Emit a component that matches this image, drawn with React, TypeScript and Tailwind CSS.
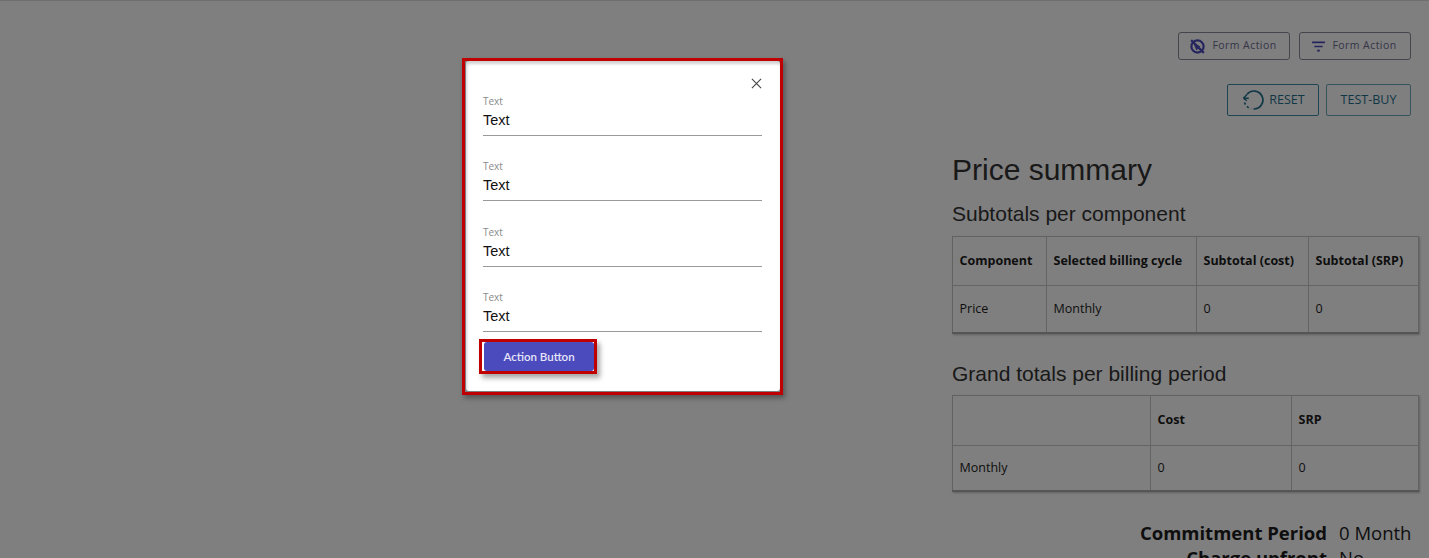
import React from 'react';

const sans = "font-['Open_Sans',sans-serif]";
const arial = "font-['Liberation_Sans',Arial,sans-serif]";

function NoVisibilityIcon() {
  return (
    <svg viewBox="0 0 20 20" className="w-[17px] h-[17px]" fill="none" stroke="#4b4bbd">
      <circle cx="10" cy="10" r="7.2" strokeWidth="2.6" />
      <path d="M6 6.5 L12.5 10 L9 14 Z" fill="#4b4bbd" strokeWidth="1" />
      <path d="M2.5 2.5 L17.5 17.5" strokeWidth="2.6" />
    </svg>
  );
}

function FilterIcon() {
  return (
    <svg viewBox="0 0 16 12" className="w-[15px] h-[11px]" fill="none" stroke="#4b4bbd" strokeWidth="1.9">
      <path d="M1 1.5h14M3.5 6h9M6.5 10.5h3" />
    </svg>
  );
}

function ResetIcon() {
  return (
    <svg viewBox="0 0 24 24" className="w-[24px] h-[24px]" fill="none" stroke="#1f6f8b" strokeWidth="1.7">
      <path d="M6 6.2A9 9 0 1 1 12.5 21" />
      <path d="M2.4 10.2h5.4M2.4 10.2l3.6-3.8M2.4 10.2l3.4 2.6" strokeWidth="1.4" />
      <path d="M3.6 14.5a9 9 0 0 0 6.6 6.3" strokeDasharray="2.2 2.4" />
    </svg>
  );
}

function FormActionButton({ icon }: { icon: React.ReactNode }) {
  return (
    <button className={`h-[28px] w-[112px] pr-[2px] flex items-center justify-center gap-[6px] rounded-[3px] border border-[#8a8a9a] text-[10.5px] tracking-[0.45px] text-[#6a6a90] ${sans}`}>
      {icon}
      Form Action
    </button>
  );
}

function Field() {
  return (
    <div className="border-b border-[#999999] h-[42px]">
      <div className={`text-[10px] leading-[14px] text-[#8a8a8a] ${sans}`}>Text</div>
      <div className={`text-[14.5px] leading-[20px] mt-[2px] text-[#111] ${arial}`}>Text</div>
    </div>
  );
}

const th = 'border-r border-[#c9c9c9] last:border-r-0 px-[6.5px] text-left font-bold';
const td = 'border-r border-[#c9c9c9] last:border-r-0 px-[6.5px] pt-[2px] text-left font-normal';

function SummaryTable({ widths, head, row, headH, rowH }: {
  widths: number[];
  head: string[];
  row: string[];
  headH: string;
  rowH: string;
}) {
  return (
    <table className={`w-full table-fixed border-collapse text-[12.5px] text-[#1c1c1c] border border-[#c4c4c4] border-b-2 border-b-[#aaaaaa] shadow-[1px_1px_2px_rgba(0,0,0,0.25)] ${sans}`}>
      <colgroup>
        {widths.map((w, i) => (
          <col key={i} style={{ width: w }} />
        ))}
      </colgroup>
      <thead>
        <tr className={`${headH} border-b border-[#c9c9c9]`}>
          {head.map((h, i) => (
            <th key={i} className={th}>{h}</th>
          ))}
        </tr>
      </thead>
      <tbody>
        <tr className={rowH}>
          {row.map((c, i) => (
            <td key={i} className={td}>{c}</td>
          ))}
        </tr>
      </tbody>
    </table>
  );
}

export default function App() {
  return (
    <div className="relative h-[558px] overflow-hidden bg-white">
      {/* Page behind the dialog */}
      <div className="flex justify-end pr-[11px]">
        <div className="w-[466px]">
          <div className="mr-[7px] pt-[32px] flex justify-end gap-[9px]">
            <FormActionButton icon={<NoVisibilityIcon />} />
            <FormActionButton icon={<FilterIcon />} />
          </div>
          <div className={`mr-[7px] mt-[24px] flex justify-end gap-[7px] text-[12.5px] text-[#1f6f8b] ${sans}`}>
            <button className="h-[32px] w-[92px] flex items-center justify-center gap-[4px] rounded-[2px] border border-[#3b8aa5]">
              <ResetIcon />
              RESET
            </button>
            <button className="h-[32px] w-[85px] rounded-[2px] border border-[#6fa6ba]">TEST-BUY</button>
          </div>

          <h1 className={`mt-[35px] text-[30px] leading-[38px] text-[#333] ${arial}`}>Price summary</h1>
          <h2 className={`mt-[13px] text-[21px] leading-[24px] text-[#333] ${arial}`}>Subtotals per component</h2>
          <div className="mt-[10px]">
            <SummaryTable
              widths={[94, 150, 112, 110]}
              head={['Component', 'Selected billing cycle', 'Subtotal (cost)', 'Subtotal (SRP)']}
              row={['Price', 'Monthly', '0', '0']}
              headH="h-[49px]"
              rowH="h-[47px]"
            />
          </div>

          <h2 className={`mt-[28px] text-[21px] leading-[24px] text-[#333] ${arial}`}>Grand totals per billing period</h2>
          <div className="mt-[9px]">
            <SummaryTable
              widths={[198, 141, 127]}
              head={['', 'Cost', 'SRP']}
              row={['Monthly', '0', '0']}
              headH="h-[50px]"
              rowH="h-[46px]"
            />
          </div>

          <div className={`mr-[7px] mt-[28px] text-[18.5px] leading-[25px] text-[#1c1c1c] ${sans}`}>
            <div className="grid grid-cols-[1fr_72px] gap-x-[12px] whitespace-nowrap">
              <span className="text-right font-bold">Commitment Period</span>
              <span>0 Month</span>
              <span className="text-right font-bold">Charge upfront</span>
              <span>No</span>
            </div>
          </div>
        </div>
      </div>

      {/* Overlay */}
      <div className="absolute inset-0 bg-black/50 border-t border-[#6f6f6f]" />

      {/* Dialog, highlighted with a red frame */}
      <div className="absolute left-[462px] top-[58px] w-[321px] h-[337px] border-[3px] border-[#c00000] pl-[1px] pb-[1px] shadow-[2px_3px_5px_rgba(0,0,0,0.35)]">
        <div className="relative h-full rounded-[3px] bg-white pl-[17px] pr-[18px] pt-[33px] shadow-[inset_1px_3px_3px_rgba(0,0,0,0.18)]">
          <button className="absolute right-[16px] top-[14px] w-[16px] h-[16px] flex items-center justify-center">
            <svg viewBox="0 0 12 12" className="w-[11px] h-[11px]" fill="none" stroke="#444" strokeWidth="1.2">
              <path d="M1 1l10 10M11 1L1 11" />
            </svg>
          </button>
          <div className="flex flex-col gap-[23.3px]">
            <Field />
            <Field />
            <Field />
            <Field />
          </div>
          <div className="mt-[7px] -ml-[4px] w-[118px] h-[35px] border-[3px] border-[#c00000] pl-[2px] shadow-[3px_4px_5px_rgba(0,0,0,0.35)]">
            <button className="w-full h-full rounded-[3px] bg-[#4b4bbd] text-[#e6e6f7] text-[11.5px] font-semibold font-['Lato',sans-serif]">
              Action Button
            </button>
          </div>
        </div>
      </div>
    </div>
  );
}
